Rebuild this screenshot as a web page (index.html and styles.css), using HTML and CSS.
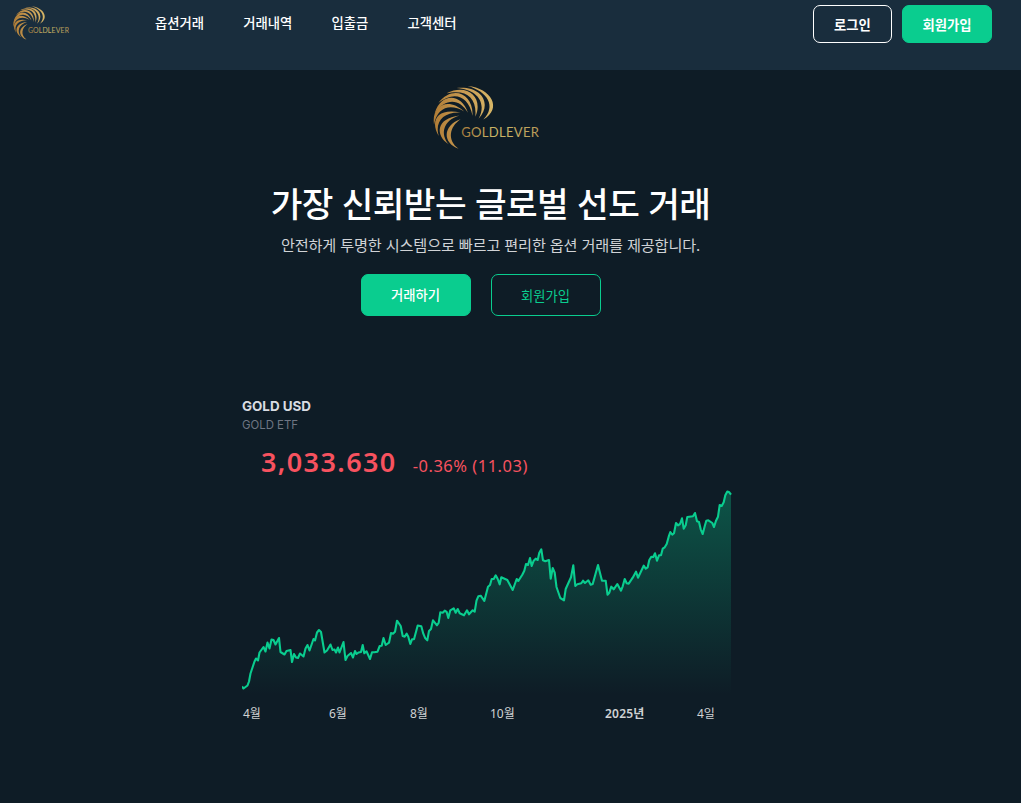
FILE: index.html
```html
<!DOCTYPE html>
<html lang="ko">
  <head>
    <meta charset="UTF-8" />
    <meta name="viewport" content="width=device-width, initial-scale=1.0" />
    <title>GOLDLEVER</title>
    <link rel="stylesheet" href="styles.css">
  </head>

  <body>
    <svg class="defs" width="0" height="0">
      <defs>
        <linearGradient id="gold" gradientUnits="userSpaceOnUse" x1="42" y1="0" x2="225" y2="0">
          <stop offset="0" stop-color="#b07c35" />
          <stop offset="0.5" stop-color="#c79a52" />
          <stop offset="1" stop-color="#d8b868" />
        </linearGradient>
        <linearGradient id="goldText" gradientUnits="userSpaceOnUse" x1="125" y1="0" x2="356" y2="0">
          <stop offset="0" stop-color="#a87a3c" />
          <stop offset="0.45" stop-color="#cdb968" />
          <stop offset="1" stop-color="#b99a58" />
        </linearGradient>
        <symbol id="logo" viewBox="42 20 316 188">
          <g fill="url(#gold)">
            <path d="M118 207 C70 190 70 138 124 119 C90 142 84 182 118 207Z" />
            <path d="M89 194 C48 168 50 116 121 108 C72 122 62 164 89 194Z" />
            <path d="M59 169 C32 124 54 84 124 99 C74 96 46 126 59 169Z" />
            <path d="M45 136 C36 76 88 52 135 96 C94 72 54 82 45 136Z" />
            <path d="M47 101 C66 38 128 42 146 100 C122 58 80 54 47 101Z" />
            <path d="M58 70 C98 18 162 38 160 109 C146 46 104 36 58 70Z" />
            <path d="M82 42 C144 10 194 54 168 112 C174 54 140 28 82 42Z" />
            <path d="M112 26 C186 18 220 72 178 118 C204 68 172 30 112 26Z" />
            <path d="M145 20 C216 26 250 88 192 120 C232 80 204 36 145 20Z" />
          </g>
          <text x="126" y="171" textLength="232" fill="url(#goldText)">GOLDLEVER</text>
        </symbol>
      </defs>
    </svg>

    <header class="header">
      <svg class="header-logo"><use href="#logo" /></svg>
      <nav class="nav">
        <a>옵션거래</a>
        <a>거래내역</a>
        <a>입출금</a>
        <a>고객센터</a>
      </nav>
      <div class="auth">
        <button class="btn btn-login">로그인</button>
        <button class="btn btn-join">회원가입</button>
      </div>
    </header>

    <main class="main">
      <section class="hero">
        <svg class="hero-logo"><use href="#logo" /></svg>
        <h1>가장 신뢰받는 글로벌 선도 거래</h1>
        <p>안전하게 투명한 시스템으로 빠르고 편리한 옵션 거래를 제공합니다.</p>
        <div class="hero-btns">
          <button class="btn btn-trade">거래하기</button>
          <button class="btn btn-outline">회원가입</button>
        </div>
      </section>

      <section class="chart">
        <h2>GOLD USD</h2>
        <div class="sub">GOLD ETF</div>
        <div class="price">
          <strong>3,033.630</strong>
          <span>-0.36% (11.03)</span>
        </div>
        <svg class="graph" viewBox="242 485 490 212">
          <defs>
            <linearGradient id="area" gradientUnits="userSpaceOnUse" x1="0" y1="491" x2="0" y2="695">
              <stop offset="0" stop-color="#0acd8f" stop-opacity="0.32" />
              <stop offset="1" stop-color="#0acd8f" stop-opacity="0" />
            </linearGradient>
          </defs>
          <path id="fill" fill="url(#area)" />
          <polyline id="line" fill="none" stroke="#0acd8f" stroke-width="2.1" stroke-linejoin="round" />
        </svg>
        <ul class="months">
          <li>4월</li>
          <li>6월</li>
          <li>8월</li>
          <li>10월</li>
          <li class="year">2025년</li>
          <li>4일</li>
        </ul>
      </section>
    </main>

    <script>
      // 차트 데이터 (x,y)
      const points =
        "242,686.5 243.5,688.5 247.5,685.5 249,681.5 250.5,673.5 252.5,667.5 254.5,661.5 256,658.5 258,660.5 259.5,652.5 263.5,647 265.5,651.5 267.5,642.5 269.5,648.5 271.5,639.5 273.5,640 275.5,644.5 279,638 280.5,652 284.5,654.5 286.5,651 290.5,650 292,662 294,654 296,657.5 298,658 300,653.5 303.5,656.5 305.5,648.5 307.5,645 309.5,650.5 313.5,639 315,640.5 317,632.5 319,630 321,632 324.5,652.5 327,650.5 330.5,644.5 332.5,650 334.5,649.5 336,652.5 338,647.5 339.5,652.5 343.5,642 345.5,660 347.5,656 351,653 353,657.5 355,651 356.5,654 358.5,652.5 361,652 362.7,645 364.3,653.3 366.5,651.3 370,659 372,652.3 374.3,652.3 377.5,651.7 379.7,646 381.7,645.7 383.5,638 385.7,645 389,642.7 391,633 393,633.7 395,631.7 397,620.7 400.7,626 402.7,636 404.7,636.7 406.7,633.7 408.3,636.7 410.3,644 412,639.3 414,639.3 417.7,625.5 421.3,626.3 423.3,633.7 425.3,638.3 427.3,640.3 429,631 431,629 433,620.3 437,625.3 438.7,622.7 440.3,612.3 442.7,612.7 444.7,610.7 446.7,612 448.3,618 450.3,610.3 453.7,608.3 455.7,612.7 457.7,609 459.7,613.3 464,615.3 467,610.3 469,614.3 472.7,610.3 474.7,611.7 476.5,600.7 478.3,596.3 480.7,595.7 484.3,601 488,586.7 490,585 491.7,579 493.7,579 495.7,575.3 497.7,579 499.7,584.3 501.3,577.3 507.3,580 512.7,590 516.7,579 518.3,581 522.3,574.7 524.3,570.7 526,564 528,565 530,558 531.7,566 533.7,560.7 535.7,558.7 537.7,560 539.3,552.7 541.3,549.3 543,560.3 545.3,561.3 549,560 550.7,578.7 552.7,568 554.7,572.7 556.5,587 560.3,598 564,600.3 565.7,589 571,577.3 573.3,565.3 575.3,586 577.3,584.3 581.3,583.3 583,580.7 585,583 588.3,580.3 590.7,584.7 592.7,584 598,565 600,573 602,580.7 605.7,580.7 607.5,594.7 609.3,592.7 611.3,586.7 613.7,589.3 617.3,584 621,590.7 622.7,586.3 624.7,579 626.7,583.3 628.7,583.7 632.7,577.7 636,571.7 638,577.7 643.7,565.7 645.7,568.7 647.7,567.3 649.3,560 651.3,556.7 653.3,557 655,553.3 657,560.7 659,555.3 661,555.3 662.7,548.7 664.7,547.3 666.7,544 668.7,536.7 670.3,532 672.3,534.7 674,533.3 676,523 678,525.3 680,524 682,518.3 683.7,528.7 685.7,525.3 687.3,517 693,516.3 695,513 697,521.3 699,522 700.7,529.3 702.7,534 704.7,526.3 706.3,520.7 708.3,520.3 712.3,523 714,527 716,520.7 718,516.7 719.7,505 721.7,506 723.7,502.3 725.3,495.3 727.3,491.5 729.3,492.3 731,494.7";

      document.querySelector("#line").setAttribute("points", points);
      document
        .querySelector("#fill")
        .setAttribute("d", "M" + points + " L731,697 L242,697 Z");
    </script>
  </body>
</html>
```
FILE: styles.css
```css
* {
  padding: 0;
  margin: 0;
  box-sizing: border-box;
}

body {
  height: 803px;
  overflow: hidden;
  background-color: #0e1c26;
  color: #fff;
  font-family: "Noto Sans CJK KR", sans-serif;
}

.defs {
  position: absolute;
}

#logo text {
  font-family: Lato, sans-serif;
  font-size: 39px;
}

.header {
  display: flex;
  align-items: flex-start;
  height: 70px;
  padding: 5px 29px 0 13px;
  background-color: #192d3d;
}

.header-logo {
  width: 56px;
  height: 34px;
  margin-top: 1px;
}

.nav {
  display: flex;
  gap: 39.2px;
  margin-left: 86px;
  font-size: 13.333px;
  font-weight: 500;
  line-height: 36px;
}

.auth {
  display: flex;
  gap: 10px;
  margin-left: auto;
}

.btn {
  border: 1px solid #0acd8f;
  border-radius: 7px;
  font-family: inherit;
  font-size: 13.333px;
  color: #fff;
  cursor: pointer;
}

.btn-login,
.btn-join {
  width: 79px;
  height: 38px;
  font-weight: 700;
}

.btn-login {
  border-color: #fff;
  background-color: transparent;
}

.btn-join {
  width: 90px;
  background-color: #0acd8f;
}

.main {
  width: 981px;
}

.hero {
  display: flex;
  flex-direction: column;
  align-items: center;
  padding-top: 16px;
}

.hero-logo {
  width: 106px;
  height: 63px;
  margin-right: 10px;
}

.hero h1 {
  margin-top: 28px;
  font-size: 34.4px;
  font-weight: 500;
  line-height: 50px;
  letter-spacing: -0.6px;
}

.hero p {
  margin-top: 5px;
  font-size: 15.2px;
  line-height: 24px;
  letter-spacing: -0.17px;
  color: #d0d3d6;
}

.hero-btns {
  display: flex;
  gap: 20px;
  margin-top: 18px;
  margin-right: 19px;
}

.btn-trade,
.btn-outline {
  width: 110px;
  height: 42px;
}

.btn-trade {
  padding: 0 1px 2px 0;
  background-color: #0acd8f;
  font-weight: 500;
}

.btn-outline {
  padding-right: 1px;
  background-color: transparent;
  color: #0acd8f;
}

.chart {
  width: 490px;
  margin: 81px 0 0 242px;
}

.chart h2 {
  font: 700 13.4px/18px Inter, sans-serif;
  color: #d9dce2;
}

.sub {
  font: 400 11.4px/20px Inter, sans-serif;
  color: #6f7683;
}

.price {
  display: flex;
  align-items: baseline;
  gap: 16px;
  height: 50px;
  padding: 7px 0 0 19px;
  font-family: "Noto Sans", sans-serif;
  color: #f7525f;
}

.price strong {
  font-size: 27px;
  font-weight: 600;
  line-height: 40px;
  letter-spacing: 1.4px;
}

.price span {
  font-size: 16.5px;
  letter-spacing: 0.5px;
}

.graph {
  display: block;
  width: 490px;
  height: 212px;
}

.months {
  display: flex;
  padding-left: 1px;
  list-style: none;
  font-family: "Noto Sans", "Noto Sans CJK KR", sans-serif;
  font-size: 12px;
  line-height: 34px;
  color: #d0d2d4;
}

.months li {
  flex: none;
  width: 80px;
  white-space: nowrap;
}

.months li:first-child {
  width: 86px;
}

.months li:nth-child(2) {
  width: 81px;
}

.months li:nth-child(4) {
  width: 115px;
}

.months .year {
  width: 92px;
  font-weight: 600;
  letter-spacing: 0.2px;
}

.months li:last-child {
  width: 20px;
}
```
